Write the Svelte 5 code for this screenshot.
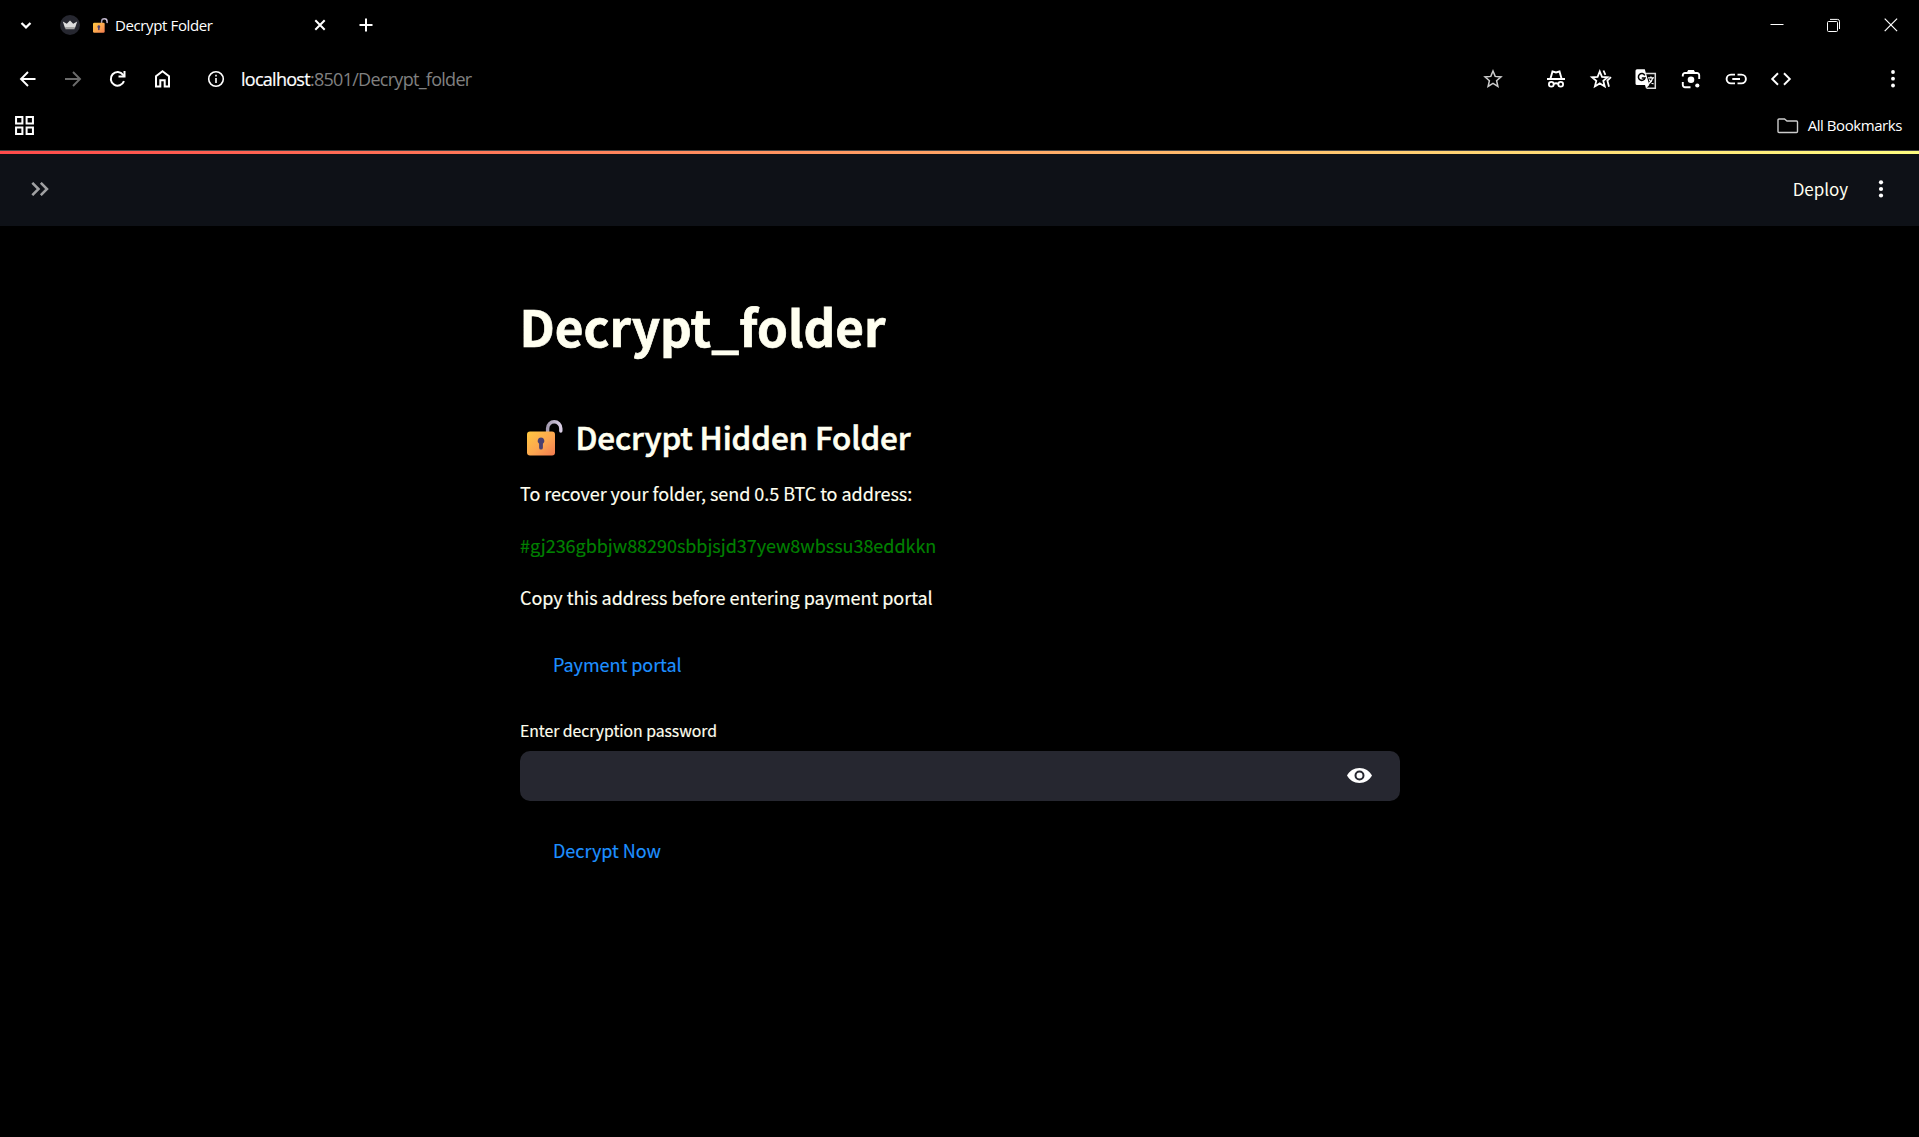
<script>
  const nav = [
    { name: 'back', x: 'M19.500 12H5M12 5l-7 7 7 7', dim: false },
    { name: 'forward', x: 'M4 12h15M12 5l7 7-7 7', dim: true }
  ];
</script>

{#snippet lock()}
  <svg class="lock" viewBox="0 0 36 36" aria-hidden="true">
    <defs>
      <linearGradient id="body" x1="0" y1="0" x2="1" y2="1">
        <stop offset="0" stop-color="#ffc83f" />
        <stop offset=".55" stop-color="#fca650" />
        <stop offset="1" stop-color="#f27a50" />
      </linearGradient>
      <linearGradient id="shackle" x1="0" y1="0" x2="1" y2="0">
        <stop offset="0" stop-color="#a49bb0" />
        <stop offset="1" stop-color="#d8cde4" />
      </linearGradient>
    </defs>
    <path d="M20.6 13V8.400a6.600 6.600 0 0 1 13.200 0V11" stroke="url(#shackle)" stroke-width="3.400" stroke-linecap="round" />
    <rect x="0" y="11.500" width="28" height="24" rx="3" fill="url(#body)" />
    <path d="M14 17.500a3.400 3.400 0 0 0-1.900 6.200v4a1.900 1.900 0 0 0 3.800 0v-4a3.400 3.400 0 0 0-1.900-6.200z" fill="#4b4070" />
  </svg>
{/snippet}

<div class="browser">
  <div class="tabs">
    <svg class="i24 chev" viewBox="0 0 24 24"><path d="M7.500 10l4.500 4.400 4.500-4.400" stroke-width="2.200" /></svg>
    <svg class="crown" viewBox="0 0 20 20">
      <circle cx="10" cy="10" r="10" fill="#262730" />
      <path d="M2.800 6.500l4 2.300L10 5.500l3.200 3.300 4-2.300-2.200 6.500H5z" fill="#ddd" />
      <path d="M5 12h10l-.5 2.200h-9z" fill="#a5a5a5" />
    </svg>
    <span class="tablock">{@render lock()}</span>
    <span class="title">Decrypt Folder</span>
    <svg class="i24 close" viewBox="0 0 24 24"><path d="M7.300 7.300l9.400 9.400M16.700 7.300l-9.400 9.400" /></svg>
    <svg class="i24 plus" viewBox="0 0 24 24"><path d="M12 5.500v13M5.500 12h13" /></svg>
    <div class="window">
      <svg viewBox="0 0 14 14"><path d="M.5 6.500h13" stroke-width="1" /></svg>
      <svg viewBox="0 0 14 14"><rect x=".5" y="3.500" width="10" height="10" rx="1" stroke-width="1" /><path d="M3 1.400h7.500a2 2 0 0 1 2 2V11" stroke-width="1" /></svg>
      <svg viewBox="0 0 14 14"><path d="M.7 .7l12.400 12.400M13.100 .7L.7 13.100" stroke-width="1.200" /></svg>
    </div>
  </div>

  <div class="toolbar">
    <div class="nav">
      {#each nav as item (item.name)}
        <svg class="i24" class:dim={item.dim} viewBox="0 0 24 24"><path d={item.x} stroke-width="1.900" /></svg>
      {/each}
      <svg class="i24" viewBox="0 0 24 24"><path d="M18 14.200A6.800 6.800 0 1 1 17.100 7.800l1.400 1.800" /><path d="M18.500 4v5.500H12.500" /></svg>
      <svg class="i24" viewBox="0 0 24 24"><path d="M5 19.500V9.200L11.500 4.300 18 9.200v10.300h-4.300v-6.200H9.300v6.200z" /></svg>
    </div>
    <svg class="i24 info" viewBox="0 0 24 24"><circle cx="12" cy="12" r="7.300" stroke-width="1.600" /><path d="M12 11v5M12 7.800v1.600" stroke-width="1.600" /></svg>
    <span class="url"><b>localhost</b>:8501/Decrypt_folder</span>
    <svg class="i24 star" viewBox="0 0 24 24"><path d="M12 4l2.200 5.400 5.800.5-4.400 3.800 1.300 5.700L12 16.400l-4.900 3 1.300-5.700L4 9.900l5.800-.5z" stroke-width="1.500" /></svg>
    <div class="tools">
      <svg class="i24" viewBox="0 0 24 24"><circle cx="7.300" cy="17.300" r="2.400" stroke-width="1.800" /><circle cx="16.700" cy="17.300" r="2.400" stroke-width="1.800" /><path d="M9.700 17c1.500-1 3.100-1 4.600 0M3 12h18M6.500 11.500L8.500 4.500l3.500.9L15.500 4.500l2 7" stroke-width="1.900" /></svg>
      <svg class="i24" viewBox="0 0 24 24"><path d="M10.800 4.500l2.200 5.400 5.600.4-4.300 3.600 1.400 5.500-4.900-3-4.900 3 1.400-5.500L3 10.300l5.600-.4zM14.500 3.500l1.900 4.400M22 10.200l-3.600 3.400 1.600 6.200" stroke-width="1.800" /></svg>
      <svg class="i24" viewBox="0 0 24 24"><path d="M12 6.500h9.300v14.800H12.500" stroke-width="1.500" stroke="#ddd" /><path class="solid" d="M3 2.300h7.800L15.300 18H3a1.500 1.500 0 0 1-1.500-1.500V3.800A1.500 1.500 0 0 1 3 2.300zM11 18h4.200L12 21.500z" /><path d="M10.800 8.300a3.400 3.400 0 1 0 .3 2.600H7.800" stroke="#000" stroke-width="1.500" /><path d="M14 10.800h6M16.900 9.500v1.300M18.700 10.800c-.5 2.700-2 4.500-4 5.800M15.200 12.500c.8 2 2.300 3.500 4.300 4.500" stroke-width="1.300" /></svg>
      <svg class="i24" viewBox="0 0 24 24"><path d="M3.800 9.500V8.200a2.200 2.200 0 0 1 2.200-2.200h12a2.200 2.200 0 0 1 2.200 2.200V12M3.800 15v3a2.200 2.200 0 0 0 2.200 2.200h5.500" stroke-width="1.900" /><path class="solid" d="M7.500 6l1.700-3h5.600l1.700 3z" /><circle class="solid" cx="12" cy="12.700" r="3.300" /><circle class="solid" cx="18.300" cy="18.500" r="2.100" /></svg>
      <svg class="i24" viewBox="0 0 24 24"><path d="M11 7.600H7a4.400 4.400 0 0 0 0 8.800h4M13.500 7.600h4a4.400 4.400 0 0 1 0 8.800h-4M8.300 12h7.700" stroke-width="1.900" /></svg>
      <svg class="i24" viewBox="0 0 24 24"><path d="M9 6.300L3.200 12 9 17.700M15 6.300l5.800 5.700-5.800 5.700" stroke-width="1.900" /></svg>
    </div>
    <svg class="i24 dots" viewBox="0 0 24 24"><circle class="solid" cx="12" cy="5" r="1.900" /><circle class="solid" cx="12" cy="11.700" r="1.900" /><circle class="solid" cx="12" cy="18.500" r="1.900" /></svg>
  </div>

  <div class="bookmarks">
    <svg class="grid" viewBox="0 0 18 18"><path d="M1 1h6v6H1zM11 1h6v6h-6zM1 11h6v6H1zM11 11h6v6h-6z" stroke-width="1.900" /></svg>
    <svg class="folder" viewBox="0 0 22 16"><path d="M1 13.500V2a1 1 0 0 1 1-1h5.500l2.500 2h9.500a1 1 0 0 1 1 1v9.500a1 1 0 0 1-1 1H2a1 1 0 0 1-1-1z" stroke-width="1.400" /></svg>
    <span class="all">All Bookmarks</span>
  </div>
</div>

<div class="app">
  <div class="decoration"></div>
  <header>
    <svg class="expand" viewBox="0 0 18 14"><path d="M1.300 .8L7.500 7l-6.200 6.200M9.800 .8L16 7l-6.200 6.200" stroke-width="2.500" /></svg>
    <span class="deploy">Deploy</span>
    <svg class="more" viewBox="0 0 6 18"><circle class="solid" cx="3" cy="2.300" r="2.100" /><circle class="solid" cx="3" cy="9" r="2.100" /><circle class="solid" cx="3" cy="15.500" r="2.100" /></svg>
  </header>
  <main>
    <h1>Decrypt_folder</h1>
    <h2>{@render lock()}<span>Decrypt Hidden Folder</span></h2>
    <p class="p1">To recover your folder, send 0.5 BTC to address:</p>
    <p class="address">#gj236gbbjw88290sbbjsjd37yew8wbssu38eddkkn</p>
    <p class="p3">Copy this address before entering payment portal</p>
    <button class="pay">Payment portal</button>
    <label for="pw">Enter decryption password</label>
    <div class="field">
      <input id="pw" type="password" />
      <svg class="eye" viewBox="0 0 25 16"><path class="solid" fill-rule="evenodd" d="M12.500 0C18 0 22.700 3 25 7.500 22.700 12 18 15 12.500 15S2.300 12 0 7.500C2.300 3 7 0 12.500 0zm0 2.500a5 5 0 1 0 0 10 5 5 0 0 0 0-10zm0 2a3 3 0 1 1 0 6 3 3 0 0 1 0-6z" /></svg>
    </div>
    <button class="now">Decrypt Now</button>
  </main>
</div>

<style>
  :global(body) { background: #000; }
  svg { display: block; flex: none; fill: none; stroke: #fff; stroke-width: 2; }
  svg .solid { stroke: none; fill: #fff; }
  .lock { stroke: none; }
  .i24 { width: 24px; height: 24px; }
  .browser { height: 150px; border-bottom: 1px solid #444; font-family: "Open Sans", "Noto Sans", sans-serif; color: #fff; white-space: nowrap; }
  .tabs { display: flex; align-items: center; height: 50px; padding-left: 14px; box-sizing: border-box; }
  .crown { width: 20px; height: 20px; margin-left: 22px; stroke: none; }
  .tablock { margin: 1px 0 0 13px; }
  .tablock .lock { width: 15px; height: 15px; }
  .title { width: 193px; margin-left: 7px; font-size: 15px; line-height: 24px; letter-spacing: -.38px; }
  .close { margin-right: 22px; }
  .window { display: flex; gap: 43px; margin-left: auto; padding-right: 21px; }
  .window svg { width: 14px; height: 14px; }
  .toolbar { display: flex; align-items: center; height: 58px; padding-left: 16px; box-sizing: border-box; }
  .nav { display: flex; gap: 21px; }
  .dim { opacity: .42; }
  .info { margin-left: 29px; }
  .url { margin-left: 13px; width: 1240px; font-size: 18px; letter-spacing: -.72px; line-height: 26px; color: #808080; }
  .url b { font-weight: 400; color: #fff; -webkit-text-stroke: .2px; }
  .star { stroke: #ccc; }
  .tools { display: flex; gap: 21px; margin-left: 39px; }
  .dots { margin: 0 14px 0 auto; }
  .bookmarks { display: flex; align-items: center; height: 35px; padding: 0 17px 0 15px; }
  .grid { width: 19px; height: 19px; }
  .folder { width: 22px; height: 16px; margin-left: auto; stroke: #ccc; }
  .all { margin: -2px 0 0 9px; font-size: 15px; line-height: 24px; letter-spacing: -.43px; }
  .app { font-family: "Noto Sans CJK JP", sans-serif; color: #fffff0; }
  .decoration { height: 3px; background: linear-gradient(90deg, #ff4b4b, #fffd80); }
  header { display: flex; align-items: center; height: 72px; box-sizing: border-box; background: #0e1117; padding: 0 35px 2px 31px; }
  .expand { width: 18px; height: 14px; stroke: #a0a1a3; }
  .deploy { margin: 0 30px 0 auto; font-size: 17px; line-height: 28px; letter-spacing: -.05px; }
  .more { width: 6px; height: 18px; }
  main { display: flex; flex-direction: column; width: 880px; margin: 0 auto; padding-top: 67px; }
  h1, h2, p { margin: 0; }
  h1 { font-size: 49.400px; line-height: 66px; font-weight: 700; -webkit-text-stroke: .7px; }
  h2 { display: flex; align-items: flex-start; margin-top: 57px; font-size: 31.400px; line-height: 42px; font-weight: 500; letter-spacing: -.13px; -webkit-text-stroke: .6px; }
  h2 .lock { width: 36px; height: 36px; margin: 4px 13px 0 7px; }
  p { font-size: 18px; line-height: 32px; letter-spacing: -.04px; padding-left: .5px; -webkit-text-stroke: .15px; }
  .p1 { margin-top: 19px; }
  .address, .p3 { margin-top: 20px; }
  .address { color: #008000; }
  button { align-self: flex-start; padding: 0 33.500px; border: 0; background: none; color: #1e90ff; font: inherit; font-size: 18px; line-height: 32px; letter-spacing: -.04px; -webkit-text-stroke: .15px; }
  .pay { margin-top: 35px; }
  label { margin-top: 36px; font-size: 15.800px; line-height: 30px; letter-spacing: -.05px; padding-left: .5px; -webkit-text-stroke: .15px; }
  .field { display: flex; align-items: center; height: 50px; margin-top: 5px; padding-right: 28px; border-radius: 10px; background: #262730; }
  input { flex: 1; height: 100%; padding: 0 16px; border: 0; outline: 0; background: none; box-sizing: border-box; color: inherit; }
  .eye { width: 25px; height: 16px; }
  .now { margin-top: 33px; }
</style>
